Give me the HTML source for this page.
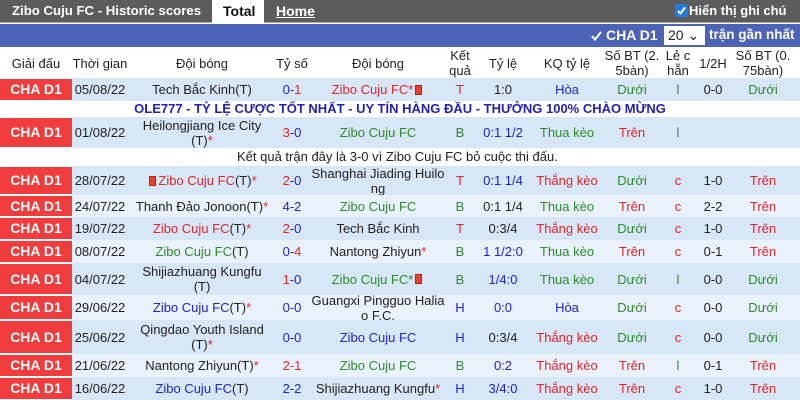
<!DOCTYPE html>
<html><head><meta charset="utf-8"><style>
*{margin:0;padding:0;box-sizing:border-box}
body{width:800px;height:400px;overflow:hidden;background:#fff;font-family:"Liberation Sans",Arial,sans-serif;font-size:13px;color:#222;position:relative}
.top{position:absolute;left:0;top:0;width:800px;height:23px;background:#5c5c5c;border-bottom:1px solid #aaa}
.top span{position:absolute;top:3px;font-weight:bold;font-size:14px;color:#fff;white-space:nowrap}
.tab{position:absolute;left:212px;top:0;width:52px;height:23px;background:#fff}
.bar{position:absolute;left:0;top:24px;width:800px;height:23px;background:#4c63b6;color:#fff;font-weight:bold;font-size:14px}
.row{position:absolute;left:0;width:800px}
.c{position:absolute;top:0;height:100%;display:flex;align-items:center;justify-content:center;text-align:center;line-height:15px}
.lg{left:0;width:72px;background:#f03c3c;color:#fff;font-weight:bold;font-size:14px;border-bottom:1px solid #fff;border-top:1px solid #fff}
.b{background:#d7e7f6}.w{background:#e9f2fa}
.r{color:#e0242b}.g{color:#2f8a2f}.n{color:#2222c8}.k{color:#222}
.fl{display:inline-block;width:7px;height:10px;background:#e8402a;border:1px solid #c02010;margin:0 2px;vertical-align:-1px}
</style></head><body>
<div class="top"><span style="left:12px;font-size:13.2px">Zibo Cuju FC - Historic scores</span></div>
<div class="tab"></div>
<div class="top" style="background:none;border:none"><span style="left:223px;color:#111">Total</span><span style="left:276px;text-decoration:underline">Home</span>
<svg style="position:absolute;left:675px;top:4px" width="13" height="13"><rect width="13" height="13" rx="2" fill="#1e7be0"/><path d="M3 7 L5.5 9.5 L10 3.5" stroke="#fff" stroke-width="2" fill="none"/></svg>
<span style="left:689px;font-size:13px">Hiển thị ghi chú</span></div>
<div class="bar"><svg style="position:absolute;left:590px;top:6px" width="13" height="12"><path d="M2 6 L5 9.5 L11 2" stroke="#fff" stroke-width="2" fill="none"/></svg><span style="position:absolute;left:606px;top:3px">CHA D1</span>
<span style="position:absolute;left:664px;top:2px;width:41px;height:19px;background:#fff;color:#222;font-weight:normal;font-size:14px;padding:1px 4px">20 ⌄</span>
<span style="position:absolute;left:709px;top:3px;font-size:13.5px;white-space:nowrap">trận gần nhất</span></div>

<div id="t"></div>
<script>
const X=[[0,72],[72,56],[134,136],[274,36],[308,140],[448,24],[472,62],[534,66],[600,64],[664,28],[692,42],[734,58]];
function row(top,h,cls,cells){let s=`<div class="row ${cls}" style="top:${top}px;height:${h}px">`;cells.forEach((c,i)=>{s+=`<div class="c ${i==0?'lg':''}" style="left:${X[i][0]}px;width:${X[i][1]}px">${c}</div>`});return s+'</div>';}
const F='<span class="fl"></span>';
let h='';
h+=row(48,30,'',['<span style="color:#222;font-weight:normal;font-size:13px">Giải đấu</span>','Thời gian','Đội bóng','Tỷ&nbsp;số','Đội bóng','Kết quả','Tỷ lệ','KQ tỷ lệ','Số BT (2. 5bàn)','Lẻ c hẵn','1/2H','Số BT (0. 75bàn)']).replace('class="c lg"','class="c" ');
const R=[
[78,23,'b','05/08/22','<span class="k">Tech Bắc Kinh(T)</span>','<span class="n">0-</span><span class="r">1</span>','<span class="r">Zibo Cuju FC*</span>'+F,'<span class="r">T</span>','1:0','<span class="n">Hòa</span>','<span class="g">Dưới</span>','<span class="g">l</span>','0-0','<span class="g">Dưới</span>'],
[117,31,'b','01/08/22','<span class="k">Heilongjiang Ice City (T)<span class="r">*</span></span>','<span class="r">3</span><span class="n">-0</span>','<span class="g">Zibo Cuju FC</span>','<span class="g">B</span>','<span class="n">0:1 1/2</span>','<span class="g">Thua kèo</span>','<span class="r">Trên</span>','<span class="g">l</span>','',''],
[166,29,'b','28/07/22',F+'<span class="r">Zibo Cuju FC</span>(T)<span class="r">*</span>','<span class="r">2</span><span class="n">-0</span>','<span class="k">Shanghai Jiading Huilo ng</span>','<span class="r">T</span>','<span class="n">0:1 1/4</span>','<span class="r">Thắng kèo</span>','<span class="g">Dưới</span>','<span class="r">c</span>','1-0','<span class="r">Trên</span>'],
[195,22,'w','24/07/22','<span class="k">Thanh Đảo Jonoon(T)<span class="r">*</span></span>','<span class="n">4-2</span>','<span class="g">Zibo Cuju FC</span>','<span class="g">B</span>','0:1 1/4','<span class="g">Thua kèo</span>','<span class="r">Trên</span>','<span class="r">c</span>','2-2','<span class="r">Trên</span>'],
[217,23,'b','19/07/22','<span class="r">Zibo Cuju FC</span>(T)<span class="r">*</span>','<span class="r">2</span><span class="n">-0</span>','<span class="k">Tech Bắc Kinh</span>','<span class="r">T</span>','0:3/4','<span class="r">Thắng kèo</span>','<span class="g">Dưới</span>','<span class="r">c</span>','1-0','<span class="r">Trên</span>'],
[240,23,'w','08/07/22','<span class="g">Zibo Cuju FC</span>(T)','<span class="n">0-</span><span class="r">4</span>','<span class="k">Nantong Zhiyun<span class="r">*</span></span>','<span class="g">B</span>','<span class="n">1 1/2:0</span>','<span class="g">Thua kèo</span>','<span class="r">Trên</span>','<span class="r">c</span>','0-1','<span class="r">Trên</span>'],
[263,32,'b','04/07/22','<span class="k">Shijiazhuang Kungfu (T)</span>','<span class="r">1</span><span class="n">-0</span>','<span class="g">Zibo Cuju FC*</span>'+F,'<span class="g">B</span>','<span class="n">1/4:0</span>','<span class="g">Thua kèo</span>','<span class="g">Dưới</span>','<span class="g">l</span>','0-0','<span class="g">Dưới</span>'],
[295,25,'w','29/06/22','<span class="n">Zibo Cuju FC</span>(T)<span class="r">*</span>','<span class="n">0-0</span>','<span class="k">Guangxi Pingguo Halia o F.C.</span>','<span class="n">H</span>','<span class="n">0:0</span>','<span class="n">Hòa</span>','<span class="g">Dưới</span>','<span class="r">c</span>','0-0','<span class="g">Dưới</span>'],
[320,34,'b','25/06/22','<span class="k">Qingdao Youth Island (T)<span class="r">*</span></span>','<span class="n">0-0</span>','<span class="n">Zibo Cuju FC</span>','<span class="n">H</span>','0:3/4','<span class="r">Thắng kèo</span>','<span class="g">Dưới</span>','<span class="r">c</span>','0-0','<span class="g">Dưới</span>'],
[354,23,'w','21/06/22','<span class="k">Nantong Zhiyun(T)<span class="r">*</span></span>','<span class="r">2-1</span>','<span class="g">Zibo Cuju FC</span>','<span class="g">B</span>','<span class="n">0:2</span>','<span class="r">Thắng kèo</span>','<span class="r">Trên</span>','<span class="g">l</span>','0-1','<span class="r">Trên</span>'],
[377,23,'b','16/06/22','<span class="n">Zibo Cuju FC</span>(T)','<span class="n">2-2</span>','<span class="k">Shijiazhuang Kungfu<span class="r">*</span></span>','<span class="n">H</span>','<span class="n">3/4:0</span>','<span class="r">Thắng kèo</span>','<span class="r">Trên</span>','<span class="r">c</span>','1-0','<span class="r">Trên</span>']];
R.forEach(r=>{h+=row(r[0],r[1],r[2],['CHA D1',...r.slice(3)])});
h+='<div class="row" style="top:101px;height:16px;text-align:center;color:#2222b0;font-weight:bold;font-size:13px;line-height:16px;padding-left:0">OLE777 - TỶ LỆ CƯỢC TỐT NHẤT - UY TÍN HÀNG ĐẦU - THƯỞNG 100% CHÀO MỪNG</div>';
h+='<div class="row" style="top:148px;height:18px;line-height:18px;font-size:13px;padding-left:237px">Kết quả trận đây là 3-0 vì Zibo Cuju FC bỏ cuộc thi đấu.</div>';
document.getElementById('t').innerHTML=h;
</script>
</body></html>
